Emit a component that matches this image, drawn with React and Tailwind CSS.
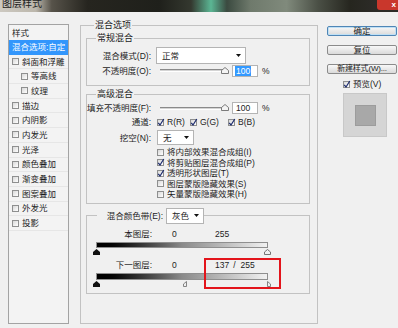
import React from 'react';

const effects = [
  { label: '斜面和浮雕' },
  { label: '等高线', indent: true },
  { label: '纹理', indent: true },
  { label: '描边' },
  { label: '内阴影' },
  { label: '内发光' },
  { label: '光泽' },
  { label: '颜色叠加' },
  { label: '渐变叠加' },
  { label: '图案叠加' },
  { label: '外发光' },
  { label: '投影' },
];

const options = [
  { label: '将内部效果混合成组(I)', checked: false },
  { label: '将剪贴图层混合成组(P)', checked: true },
  { label: '透明形状图层(T)', checked: true },
  { label: '图层蒙版隐藏效果(S)', checked: false },
  { label: '矢量蒙版隐藏效果(H)', checked: false },
];

function Check({ checked }) {
  return (
    <span className="relative w-[7px] h-[7px] shrink-0 border border-[#8e8f8f] bg-linear-to-br from-[#d8d8d8] to-white">
      {checked && (
        <svg className="absolute -left-[1px] -top-[2px]" width="8" height="9" viewBox="0 0 8 9">
          <path d="M1.2 4.8 L3 7 L6.8 1" stroke="#1d2c6e" strokeWidth="1.2" fill="none" />
        </svg>
      )}
    </span>
  );
}

function Arrow() {
  return (
    <svg width="5" height="3" viewBox="0 0 5 3">
      <path d="M0 0 H5 L2.5 3 Z" fill="#111" />
    </svg>
  );
}

function Select({ value, className }) {
  return (
    <div className={`flex items-center justify-between bg-white border border-[#b4b4b4] pl-[5px] pr-[4px] ${className}`}>
      <span>{value}</span>
      <Arrow />
    </div>
  );
}

function Slider() {
  return (
    <div className="relative w-[65px] h-[8px] flex items-center">
      <div className="w-full h-[3px] border-t border-[#8a8a8a] bg-[#d4d4d4] border-b border-b-white" />
      <svg className="absolute -right-[4px] top-[0px]" width="8" height="7" viewBox="0 0 8 7">
        <path d="M4 0.5 L7.5 3.5 L7.5 6.5 L0.5 6.5 L0.5 3.5 Z" fill="#f4f4f4" stroke="#6d6d6d" strokeWidth="0.9" />
      </svg>
    </div>
  );
}

function Thumb({ kind }) {
  if (kind === 'black')
    return (
      <svg width="7" height="6" viewBox="0 0 7 6">
        <path d="M3.5 0 L7 3 L7 6 L0 6 L0 3 Z" fill="#111" />
      </svg>
    );
  if (kind === 'white')
    return (
      <svg width="7" height="6" viewBox="0 0 7 6">
        <path d="M3.5 0.5 L6.5 3 L6.5 5.5 L0.5 5.5 L0.5 3 Z" fill="#efefef" stroke="#666" strokeWidth="0.9" />
      </svg>
    );
  if (kind === 'left')
    return (
      <svg width="7" height="6" viewBox="0 0 7 6">
        <path d="M3.5 0.5 L0.5 3 L0.5 5.5 L3.5 5.5 Z" fill="#efefef" stroke="#777" strokeWidth="0.9" />
      </svg>
    );
  return (
    <svg width="7" height="6" viewBox="0 0 7 6">
      <path d="M3.5 0.5 L6.5 3 L6.5 5.5 L3.5 5.5 Z" fill="#efefef" stroke="#777" strokeWidth="0.9" />
    </svg>
  );
}

export default function App() {
  return (
    <div className="relative w-[398px] h-[328px] overflow-hidden bg-[#f0f0f0] text-[#1c1c1c] text-[8.5px] leading-[10px] font-['Liberation_Sans','Noto_Sans_CJK_SC',sans-serif]">
      {/* 标题栏 */}
      <div className="h-[12px] flex justify-between overflow-hidden bg-[linear-gradient(90deg,#cdc9c1_0%,#bcb7ac_9%,#57534a_13%,#26251f_22%,#1f201b_40%,#34382f_48%,#5bb694_53%,#3b4a40_57%,#6f7a6c_63%,#808a7c_72%,#4a4f45_80%,#26261f_88%,#2c2b27_94%)]">
        <span className="pl-[2px] -mt-[2px] text-[10px] leading-[12px] text-[#222]">图层样式</span>
        <div className="w-[21px] h-[10px] bg-[#c9372c] rounded-bl-[3px] flex items-center justify-end pr-[2px] text-white text-[8px] leading-[8px] font-bold">x</div>
      </div>

      <div className="flex items-start">
        {/* 左侧样式列表 */}
        <div className="mt-[12px] ml-[8px] w-[61px] h-[300px] border border-[#a3a3a3] bg-[#f3f3f3]">
          <div className="h-[15px] pl-[3px] flex items-center">样式</div>
          <div className="h-[14.7px] bg-[#3296fc] text-white pl-[3px] flex items-center">混合选项:自定</div>
          {effects.map((e) => (
            <div
              key={e.label}
              className={`h-[14.7px] flex items-center gap-[3px] border-b border-[#e6e6e6] ${e.indent ? 'pl-[12px]' : 'pl-[3px]'}`}
            >
              <Check />
              <span>{e.label}</span>
            </div>
          ))}
        </div>

        {/* 混合选项 */}
        <fieldset className="mt-[7px] ml-[11px] w-[238px] h-[305px] border border-[#c2c2c2] px-[5px] pt-[1px]">
          <legend className="ml-[8px] px-[1px] text-[9px] leading-[12px]">混合选项</legend>

          <fieldset className="w-[224px] border border-[#c2c2c2] pb-[8px]">
            <legend className="ml-[9px] px-[1px] text-[9px] leading-[12px]">常规混合</legend>
            <div className="mt-[3px] h-[17px] flex items-center">
              <span className="w-[64px] text-right">混合模式(D):</span>
              <Select value="正常" className="ml-[5px] w-[90px] h-[17px]" />
            </div>
            <div className="h-[13px] flex items-center">
              <span className="w-[64px] text-right">不透明度(O):</span>
              <div className="ml-[9px]">
                <Slider />
              </div>
              <div className="ml-[7px] w-[26px] h-[12px] bg-white border border-[#b4b4b4] flex items-center pl-[2px]">
                <span className="bg-[#3399ff] text-white px-[1px]">100</span>
              </div>
              <span className="ml-[4px]">%</span>
            </div>
          </fieldset>

          <fieldset className="mt-[2px] w-[224px] border border-[#c2c2c2] pb-[3px]">
            <legend className="ml-[9px] px-[1px] text-[9px] leading-[12px]">高级混合</legend>
            <div className="mt-[2px] h-[12px] flex items-center">
              <span className="w-[64px] text-right whitespace-nowrap">填充不透明度(F):</span>
              <div className="ml-[9px]">
                <Slider />
              </div>
              <div className="ml-[7px] w-[26px] h-[12px] bg-white border border-[#b4b4b4] flex items-center pl-[3px]">100</div>
              <span className="ml-[4px]">%</span>
            </div>
            <div className="mt-[2px] h-[12px] flex items-center">
              <span className="w-[64px] text-right">通道:</span>
              <div className="ml-[6px] w-[33px] flex items-center gap-[3px]">
                <Check checked />
                <span>R(R)</span>
              </div>
              <div className="w-[38px] flex items-center gap-[3px]">
                <Check checked />
                <span>G(G)</span>
              </div>
              <div className="flex items-center gap-[3px]">
                <Check checked />
                <span>B(B)</span>
              </div>
            </div>
            <div className="mt-[2px] h-[15px] flex items-center">
              <span className="w-[64px] text-right">挖空(N):</span>
              <Select value="无" className="ml-[6px] w-[37px] h-[15px]" />
            </div>
            <div className="mt-[2px] pl-[70px]">
              {options.map((o) => (
                <div key={o.label} className="h-[10.5px] flex items-center gap-[3px]">
                  <Check checked={o.checked} />
                  <span>{o.label}</span>
                </div>
              ))}
            </div>
          </fieldset>

          <fieldset className="mt-[4px] w-[224px] border border-[#c2c2c2] pb-[6px]">
            <legend className="ml-[10px] flex items-center h-[16px]">
              <span className="w-[66px] text-right">混合颜色带(E):</span>
              <Select value="灰色" className="ml-[3px] w-[38px] h-[16px]" />
            </legend>
            <div className="mt-[5px] h-[10px] flex items-center">
              <span className="w-[65px] text-right">本图层:</span>
              <span className="ml-[20px] w-[43px]">0</span>
              <span>255</span>
            </div>
            <div className="mt-[3px] ml-[9px] w-[172px] h-[6px] border border-[#8f8f8f] bg-linear-to-r from-black via-[#8a8a8a] to-[#f2f2f2]" />
            <div className="relative ml-[9px] w-[172px] h-[7px]">
              <div className="absolute -left-[3px] top-[1px]">
                <Thumb kind="black" />
              </div>
              <div className="absolute -right-[3px] top-[1px]">
                <Thumb kind="white" />
              </div>
            </div>
            <div className="mt-[5px] h-[10px] flex items-center">
              <span className="w-[65px] text-right">下一图层:</span>
              <span className="ml-[20px] w-[43px]">0</span>
              <span>137</span>
              <span className="ml-[4px]">/</span>
              <span className="ml-[5px]">255</span>
            </div>
            <div className="mt-[3px] ml-[9px] w-[172px] h-[7px] border border-[#8f8f8f] bg-linear-to-r from-black via-[#8a8a8a] to-[#f2f2f2]" />
            <div className="relative ml-[9px] w-[172px] h-[7px]">
              <div className="absolute -left-[3px] top-[1px]">
                <Thumb kind="black" />
              </div>
              <div className="absolute left-[87px] top-[1px]">
                <Thumb kind="left" />
              </div>
              <div className="absolute -right-[3px] top-[1px]">
                <Thumb kind="right" />
              </div>
            </div>
          </fieldset>
        </fieldset>

        {/* 右侧按钮 */}
        <div className="ml-[9px] w-[70px] mt-[14px] flex flex-col">
          <button className="h-[10px] w-[70px] rounded-[2px] border border-[#4f86b6] bg-linear-to-b from-[#f8f8f8] to-[#dadada] shadow-[inset_0_0_0_1px_#bfe0f5] leading-[8px]">确定</button>
          <button className="mt-[9px] h-[10px] w-[70px] rounded-[2px] border border-[#8b8b8b] bg-linear-to-b from-[#f8f8f8] to-[#dadada] leading-[8px]">复位</button>
          <button className="mt-[9px] h-[10px] w-[70px] rounded-[2px] border border-[#8b8b8b] bg-linear-to-b from-[#f8f8f8] to-[#dadada] text-[8px] leading-[8px] whitespace-nowrap tracking-[-0.2px]">新建样式(W)...</button>
          <div className="mt-[5px] ml-[16px] h-[10px] flex items-center gap-[3px]">
            <Check checked />
            <span>预览(V)</span>
          </div>
          <div className="mt-[4px] ml-[16px] w-[44px] h-[44px] bg-[#d5d5d5] border border-[#c8c8c8] flex items-center justify-center">
            <div className="w-[21px] h-[21px] bg-[#a8a8a8] border border-[#9c9c9c]" />
          </div>
        </div>
      </div>

      {/* 红框标注 */}
      <div className="absolute left-[204px] top-[258px] w-[77px] h-[31px] border-2 border-[#e3141b]" />
    </div>
  );
}
